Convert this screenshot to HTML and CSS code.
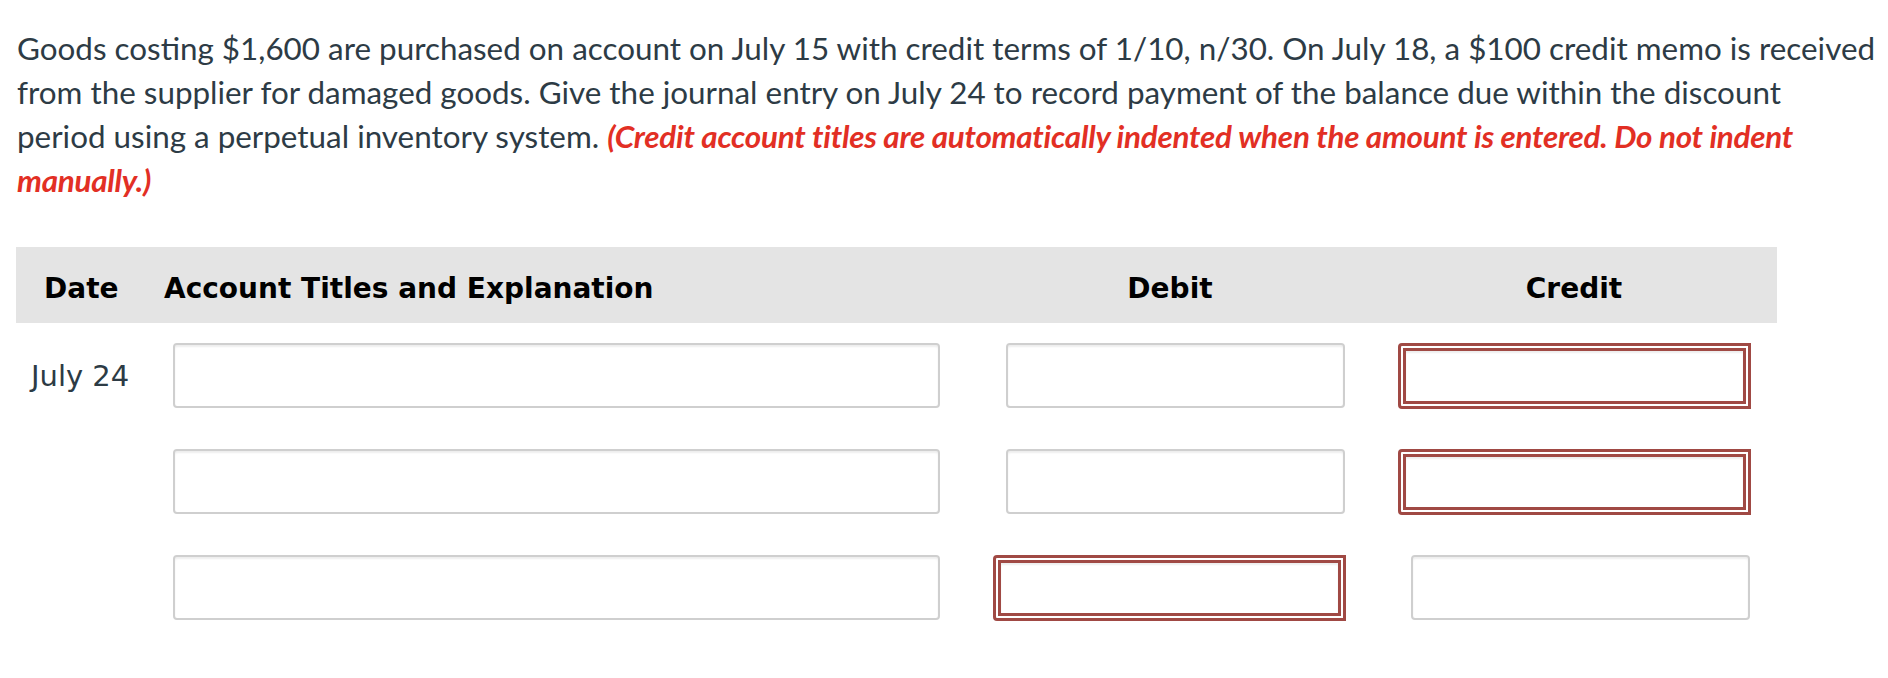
FILE: index.html
```html
<!DOCTYPE html>
<html lang="en">
<head>
<meta charset="utf-8">
<title>Journal entry</title>
<link rel="stylesheet" href="styles.css">
</head>
<body>
<div class="page">
  <p class="question">Goods costing $1,600 are purchased on account on July 15 with credit terms of 1/10, n/30. On July 18, a $100 credit memo is received<br>from the supplier for damaged goods. Give the journal entry on July 24 to record payment of the balance due within the discount<br>period using a perpetual inventory system. <em class="note">(Credit account titles are automatically indented when the amount is entered. Do not indent manually.)</em></p>

  <div class="journal">
    <div class="head">
      <div class="h-date">Date</div>
      <div class="h-acct">Account Titles and Explanation</div>
      <div class="h-debit">Debit</div>
      <div class="h-credit">Credit</div>
    </div>

    <div class="row">
      <div class="c-date">July 24</div>
      <div class="c-acct"><input class="field acct" type="text"></div>
      <div class="c-debit"><input class="field amt" type="text"></div>
      <div class="c-credit wrong"><div class="err"><input class="field amt" type="text"></div></div>
    </div>

    <div class="row">
      <div class="c-date"></div>
      <div class="c-acct"><input class="field acct" type="text"></div>
      <div class="c-debit"><input class="field amt" type="text"></div>
      <div class="c-credit wrong"><div class="err"><input class="field amt" type="text"></div></div>
    </div>

    <div class="row">
      <div class="c-date"></div>
      <div class="c-acct"><input class="field acct" type="text"></div>
      <div class="c-debit wrong"><div class="err"><input class="field amt" type="text"></div></div>
      <div class="c-credit"><input class="field amt" type="text"></div>
    </div>
  </div>
</div>
</body>
</html>
```

FILE: styles.css
```css
html, body {
  margin: 0;
  padding: 0;
  background: #ffffff;
}

.page {
  padding: 26px 6px 0 17px;
}

.question {
  margin: 0;
  font-family: Lato, "Open Sans", sans-serif;
  font-size: 31.4px;
  line-height: 44px;
  color: #2d3b45;
}

.note {
  font-style: italic;
  font-weight: 700;
  color: #e22f24;
  letter-spacing: -0.24px;
}

.journal {
  margin-top: 45px;
  margin-left: -1px;
  width: 1761px;
}

.head,
.row {
  display: grid;
  grid-template-columns: 144px 820px 380px 417px;
}

.head {
  height: 76px;
  box-sizing: border-box;
  padding-top: 6px;
  background: #e4e4e4;
  align-items: center;
  font-family: "DejaVu Sans", Verdana, sans-serif;
  font-weight: 700;
  font-size: 28px;
  color: #000;
}

.h-date { padding-left: 28px; }
.h-acct { padding-left: 4px; }
.h-debit { text-align: center; }
.h-credit { text-align: center; padding-left: 11px; }

.row {
  height: 66px;
  margin-top: 40px;
  align-items: start;
}

.head + .row { margin-top: 20px; }

.c-date {
  height: 65px;
  display: flex;
  align-items: center;
  padding-left: 15px;
  font-family: "DejaVu Sans", Verdana, sans-serif;
  font-size: 29px;
  color: #2d3b45;
}

.field {
  display: block;
  box-sizing: border-box;
  height: 65px;
  margin: 0;
  padding: 0 10px;
  border: 2px solid #cfcfcf;
  border-radius: 4px;
  background: #fff;
  box-shadow: inset 0 2px 2px rgba(0, 0, 0, 0.07);
  font-size: 20px;
  outline: none;
}

.acct { width: 767px; margin-left: 13px; }
.c-debit .amt { width: 339px; margin-left: 26px; }
.c-credit .amt { width: 339px; margin-left: 51px; }

.err {
  box-sizing: border-box;
  width: 353px;
  height: 66px;
  border: 3px solid #a04944;
  border-radius: 4px 0 0 4px;
  padding: 2px;
  background: #fff;
}

.c-debit .err { margin-left: 13px; }
.c-credit .err { margin-left: 38px; }

.err .field,
.c-debit .err .amt,
.c-credit .err .amt {
  width: 100%;
  height: 100%;
  margin: 0;
  border: 3px solid #a04944;
  border-radius: 0;
}
```
